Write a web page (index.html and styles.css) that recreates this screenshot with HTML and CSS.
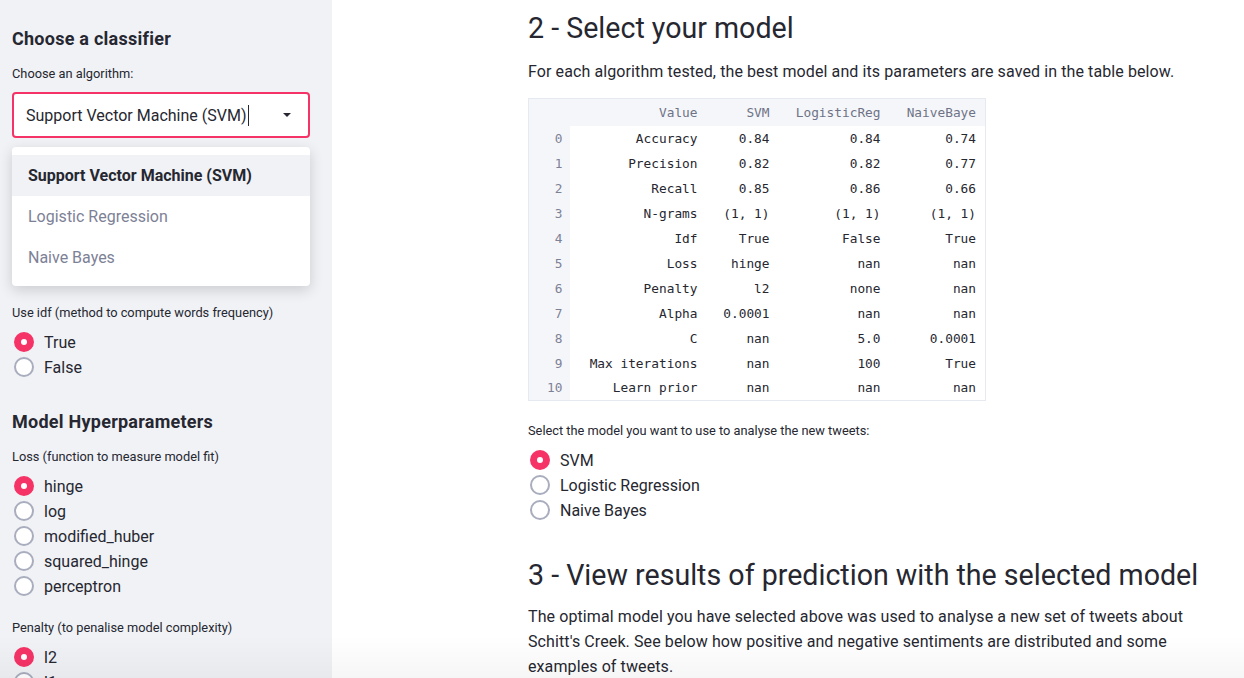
FILE: index.html
```html
<!DOCTYPE html>
<html>
<head>
<meta charset="utf-8">
<link rel="stylesheet" href="styles.css">
</head>
<body>
<div class="app">
  <aside class="sidebar">
    <h3 class="side-title">Choose a classifier</h3>
    <div class="label">Choose an algorithm:</div>
    <div class="select-wrap">
      <div class="select">
        <span class="select-value">Support Vector Machine (SVM)</span><span class="cursor"></span>
        <svg class="caret" width="10" height="6" viewBox="0 0 10 6"><path d="M1 1 L9 1 L5 5 Z" fill="#262730"/></svg>
      </div>
      <ul class="menu">
        <li class="menu-item active">Support Vector Machine (SVM)</li>
        <li class="menu-item">Logistic Regression</li>
        <li class="menu-item">Naive Bayes</li>
      </ul>
    </div>
    <div class="covered"></div>
    <div class="label">Use idf (method to compute words frequency)</div>
    <div class="radios">
      <label class="radio on"><span class="dot"></span>True</label>
      <label class="radio"><span class="dot"></span>False</label>
    </div>
    <h3 class="side-title second">Model Hyperparameters</h3>
    <div class="label">Loss (function to measure model fit)</div>
    <div class="radios">
      <label class="radio on"><span class="dot"></span>hinge</label>
      <label class="radio"><span class="dot"></span>log</label>
      <label class="radio"><span class="dot"></span>modified_huber</label>
      <label class="radio"><span class="dot"></span>squared_hinge</label>
      <label class="radio"><span class="dot"></span>perceptron</label>
    </div>
    <div class="label penalty">Penalty (to penalise model complexity)</div>
    <div class="radios">
      <label class="radio on"><span class="dot"></span>l2</label>
      <label class="radio"><span class="dot"></span>l1</label>
    </div>
  </aside>
  <main class="main">
    <div class="content">
      <h2 class="h2">2 - Select your model</h2>
      <p class="para">For each algorithm tested, the best model and its parameters are saved in the table below.</p>
      <table class="df">
        <thead>
          <tr><th class="idx"></th><th class="c1">Value</th><th class="c2">SVM</th><th class="c3">LogisticReg</th><th class="c4">NaiveBaye</th></tr>
        </thead>
        <tbody>
          <tr><th class="idx">0</th><td>Accuracy</td><td>0.84</td><td>0.84</td><td>0.74</td></tr>
          <tr><th class="idx">1</th><td>Precision</td><td>0.82</td><td>0.82</td><td>0.77</td></tr>
          <tr><th class="idx">2</th><td>Recall</td><td>0.85</td><td>0.86</td><td>0.66</td></tr>
          <tr><th class="idx">3</th><td>N-grams</td><td>(1, 1)</td><td>(1, 1)</td><td>(1, 1)</td></tr>
          <tr><th class="idx">4</th><td>Idf</td><td>True</td><td>False</td><td>True</td></tr>
          <tr><th class="idx">5</th><td>Loss</td><td>hinge</td><td>nan</td><td>nan</td></tr>
          <tr><th class="idx">6</th><td>Penalty</td><td>l2</td><td>none</td><td>nan</td></tr>
          <tr><th class="idx">7</th><td>Alpha</td><td>0.0001</td><td>nan</td><td>nan</td></tr>
          <tr><th class="idx">8</th><td>C</td><td>nan</td><td>5.0</td><td>0.0001</td></tr>
          <tr><th class="idx">9</th><td>Max iterations</td><td>nan</td><td>100</td><td>True</td></tr>
          <tr><th class="idx">10</th><td>Learn prior</td><td>nan</td><td>nan</td><td>nan</td></tr>
        </tbody>
      </table>
      <div class="label main-label">Select the model you want to use to analyse the new tweets:</div>
      <div class="radios">
        <label class="radio on"><span class="dot"></span>SVM</label>
        <label class="radio"><span class="dot"></span>Logistic Regression</label>
        <label class="radio"><span class="dot"></span>Naive Bayes</label>
      </div>
      <h2 class="h2 h2-second">3 - View results of prediction with the selected model</h2>
      <p class="para para-second">The optimal model you have selected above was used to analyse a new set of tweets about Schitt's Creek. See below how positive and negative sentiments are distributed and some examples of tweets.</p>
    </div>
  </main>
</div>
<div class="fade"></div>
</body>
</html>
```

FILE: styles.css
```css
* { box-sizing: border-box; }
html, body {
  margin: 0;
  padding: 0;
  height: 100%;
  overflow: hidden;
}
body {
  font-family: Roboto, "Noto Sans", sans-serif;
  color: #262730;
  background: #ffffff;
}
.app {
  display: flex;
  height: 678px;
}
.sidebar {
  width: 332px;
  flex: 0 0 332px;
  background: #f0f2f6;
  padding: 27px 22px 0 12px;
  overflow: hidden;
}
.side-title {
  margin: 0;
  font-size: 18px;
  line-height: 24px;
  font-weight: 700;
  letter-spacing: 0.25px;
}
.side-title.second { margin-top: 30.5px; }
.label {
  font-size: 12.8px;
  line-height: 16px;
  margin-top: 15px;
}
.select-wrap {
  position: relative;
  margin-top: 10px;
}
.select {
  height: 46px;
  border: 2px solid #f63366;
  border-radius: 4px;
  background: #fff;
  display: flex;
  align-items: center;
  padding-left: 12px;
  font-size: 16px;
}
.cursor {
  display: inline-block;
  width: 1px;
  height: 21px;
  background: #262730;
  margin-left: 2px;
}
.caret {
  margin-left: auto;
  margin-right: 16px;
}
.menu {
  position: absolute;
  top: 55px;
  left: 0;
  right: 0;
  margin: 0;
  padding: 8px 0;
  list-style: none;
  background: #fff;
  border-radius: 4px;
  box-shadow: 0 4px 14px rgba(0, 0, 0, 0.16);
  z-index: 2;
}
.menu-item {
  height: 41px;
  line-height: 41px;
  padding-left: 16px;
  font-size: 16px;
  color: #7d8196;
}
.menu-item.active {
  background: #f0f2f6;
  color: #262730;
  font-weight: 700;
}
.covered { height: 167px; }
.covered + .label { margin-top: 0; }
.radios {
  display: flex;
  flex-direction: column;
  margin-top: 8.5px;
}
.radio {
  display: flex;
  align-items: center;
  height: 25px;
  font-size: 16px;
  padding-left: 2px;
}
.dot {
  width: 20px;
  height: 20px;
  border-radius: 50%;
  border: 2px solid #a9adbd;
  background: #fff;
  margin-right: 10px;
  position: relative;
}
.radio.on .dot {
  background: #f63366;
  border-color: #f63366;
}
.radio.on .dot::after {
  content: "";
  position: absolute;
  width: 6px;
  height: 6px;
  border-radius: 50%;
  background: #fff;
  left: 5px;
  top: 5px;
}
.penalty { margin-top: 21.5px; }
.main {
  flex: 1;
  padding-left: 196px;
}
.content { width: 700px; }
.h2 {
  margin: 8px 0 0 0;
  font-size: 28.6px;
  line-height: 40px;
  font-weight: 400;
  letter-spacing: 0;
  white-space: nowrap;
}
.para {
  margin: 10.5px 0 0 0;
  font-size: 16px;
  line-height: 25px;
  letter-spacing: 0.1px;
}
.df {
  margin-top: 14.5px;
  border-collapse: collapse;
  border: 1px solid #e6e9ef;
  font-family: "DejaVu Sans Mono", "Liberation Mono", monospace;
  font-size: 12.8px;
}
.df th, .df td {
  height: 25px;
  padding: 0 9px 0 0;
  text-align: right;
  font-weight: 400;
  white-space: nowrap;
}
.df thead th {
  height: 27px;
  background: #f5f6f9;
  color: #6e7387;
}
.df tbody td { color: #262730; }
.df .idx {
  background: #f5f6f9;
  color: #7d8196;
  width: 41px;
  padding-right: 7px;
}
.df .c1 { width: 137px; }
.df .c2 { width: 72px; }
.df .c3 { width: 111px; }
.df .c4 { width: 96px; }
.main-label { margin-top: 22px; }
.h2-second { margin-top: 32.5px; }
.para-second { margin-top: 8.5px; }
.fade {
  position: fixed;
  left: 0;
  right: 0;
  bottom: 0;
  height: 42px;
  background: linear-gradient(to bottom, rgba(0,0,0,0), rgba(0,0,0,0.035));
  pointer-events: none;
}
```
